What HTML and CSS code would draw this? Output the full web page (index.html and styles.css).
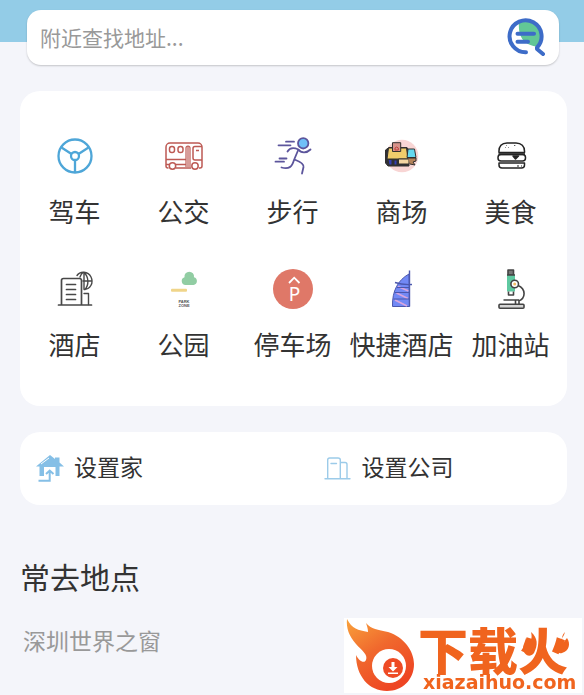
FILE: index.html
```html
<!DOCTYPE html>
<html lang="zh-CN">
<head>
    <meta charset="UTF-8">
    <meta name="viewport" content="width=device-width, initial-scale=1.0">
    <title>附近查找</title>
    <link rel="stylesheet" href="styles.css">
</head>
<body>
    <header class="top-bar"></header>

    <form class="search-box">
        <input type="text" class="search-input" id="search-input" placeholder="附近查找地址..." aria-label="附近查找地址">
        <button type="button" class="search-btn" aria-label="搜索">
            <svg class="icon" viewBox="0 0 40 40" fill="none" stroke="#3d6cc8" stroke-width="4" stroke-linecap="round" stroke-linejoin="round">
                <path d="M13 4C12 17 16 26 30 28.500C37 22 37 11 30 6C25 2 18 1 13 4z" fill="#62c796" stroke="none"/>
                <path d="M20 34.300A16 16 0 1 1 31 29.500V31L37 36"/>
                <path d="M11.500 15.700H28M11.500 23.700H22"/>
            </svg>
        </button>
    </form>

    <main class="container">
        <!-- Categories -->
        <nav class="card category-grid">
            <a href="#drive" class="category">
                <svg class="icon" viewBox="0 0 40 40" fill="none" stroke="#4ea6d8" stroke-width="2.300">
                    <circle cx="20" cy="20" r="16.500"/>
                    <circle cx="20" cy="20" r="4"/>
                    <path d="M6.500 11.500L16.500 18M33.500 11.500L23.500 18M20 24V36"/>
                </svg>
                <span>驾车</span>
            </a>
            <a href="#bus" class="category">
                <svg class="icon" viewBox="0 0 40 40" fill="none" stroke="#bd5a54" stroke-width="1.500">
                    <path d="M4.500 32H4a2 2 0 0 1-2-2V11a4 4 0 0 1 4-4H34a4 4 0 0 1 4 4V30a2 2 0 0 1-2 2H35M12 32H27"/>
                    <rect x="5.500" y="10.500" width="5" height="6" rx="2.300"/>
                    <rect x="14" y="10.500" width="5" height="6" rx="2.300"/>
                    <path d="M22 31V12q0-2 2-2t2 2V31M24 10V31" stroke-width="1.200"/>
                    <path d="M38 10.500H31q-2 0-2 2V22q0 2 2 2h7M32 14.500h3M2 23.500H22M2 28.500H5M12 28.500H22"/>
                    <circle cx="8.500" cy="30" r="3.200" fill="#fff"/>
                    <circle cx="31" cy="30" r="3.200" fill="#fff"/>
                </svg>
                <span>公交</span>
            </a>
            <a href="#walk" class="category">
                <svg class="icon" viewBox="0 0 40 40" fill="none" stroke="#5c559c" stroke-width="1.800" stroke-linecap="round" stroke-linejoin="round">
                    <circle cx="30.200" cy="7.300" r="5.200" fill="#6fc0f8"/>
                    <path d="M13 5.700H21M5.500 9.300H17.500M6.500 22.500H13.500M2.500 25.700H11"/>
                    <path d="M14.500 15.500C17 11 22 12 25.500 13.500C28 17.500 34 17 37.500 13.500"/>
                    <path d="M25 14.500L21 24C19 31 16 33.500 8.500 31.500M21.500 23.500C28 26 31 28 30.500 31L29 37.500"/>
                </svg>
                <span>步行</span>
            </a>
            <a href="#mall" class="category">
                <svg class="icon" viewBox="0 0 40 40" stroke="#33302f" stroke-width="1" stroke-linejoin="round">
                    <circle cx="20" cy="20" r="16.300" fill="#f8d5d4" stroke="none"/>
                    <path d="M3.500 14L7 11.500H25L27 15V30H6L3.500 27z" fill="#2f3038"/>
                    <path d="M6.500 12H24.500L26 23H5z" fill="#f0cc6b"/>
                    <path d="M10.500 6.700H18.700V15.500H10.500z" fill="#d8928a"/>
                    <path d="M13 12q1.700-2 3.300 0v2H13z" fill="none" stroke="#c3413d"/>
                    <path d="M26 13H32.500L34 21.500H25z" fill="#65d9ef"/>
                    <path d="M6 23.500H10V29H7zM12 24H15V29H12z" fill="#343fb3"/>
                    <path d="M16.500 23H27V28H16.500z" fill="#f3d5a2"/>
                    <path d="M26 22H34V25L31 26L33 29L28 28" fill="#b58359"/>
                </svg>
                <span>商场</span>
            </a>
            <a href="#food" class="category">
                <svg class="icon" viewBox="0 0 40 40" fill="#fff" stroke="#242424" stroke-width="1.500" stroke-linejoin="round">
                    <path d="M8 16.500C7.500 10 11 7 16 7H25C30 7 34 10 33.500 16.500z"/>
                    <path d="M15.500 9.500h.5M17.500 11.500h.5M23.500 9l.5 1M14 11.500h.5" stroke-width="1"/>
                    <rect x="7" y="18.500" width="27.500" height="6.500" rx="3"/>
                    <path d="M7.500 18.200H34" stroke-width="2"/>
                    <path d="M22 20L24.500 23L27.500 20z" fill="#242424"/>
                    <path d="M8 27H33.500V29q0 3-3 3H11q-3 0-3-3z"/>
                    <path d="M26 30h2M30 30h1" stroke-width="1"/>
                </svg>
                <span>美食</span>
            </a>
            <a href="#hotel" class="category">
                <svg class="icon" viewBox="0 0 40 40" fill="none" stroke="#484848" stroke-width="1.700" stroke-linecap="round" stroke-linejoin="round">
                    <path d="M6.500 36V11.500q0-2 2-2H24.500q2 0 2 2V36M3.500 36H36.500"/>
                    <path d="M11.500 15.500H20.500M11.500 20.500H20.500M11.500 25.500H20.500M11.500 30.500H20.500"/>
                    <path d="M22 6.500C25 2 33 2 36 8C39 14 35 20.500 29 20.500M29 3.500C34 8 34 16 30 20.500M28 3.500Q26 5 25 8M29 3.500V20M28 12H37" stroke-width="1.400"/>
                    <path d="M29 24.500H33.500V35.500" stroke-width="1.400"/>
                </svg>
                <span>酒店</span>
            </a>
            <a href="#park" class="category">
                <svg class="icon" viewBox="0 0 40 40">
                    <path d="M21.500 16a4 4 0 0 1-1-7.800a4.800 4.800 0 1 1 9.500 0a4 4 0 0 1-.5 7.800z" fill="#91cda3"/>
                    <rect x="7" y="19.700" width="16" height="3" rx="1" fill="#f0d58a"/>
                    <text class="park-text" x="20" y="33.500">PARK</text>
                    <text class="park-text" x="20" y="38">ZONE</text>
                </svg>
                <span>公园</span>
            </a>
            <a href="#parking" class="category">
                <svg class="icon" viewBox="0 0 40 40">
                    <circle cx="20" cy="20" r="20" fill="#df7868"/>
                    <path d="M16 14L21.200 8.700L26.500 14" fill="none" stroke="#fff" stroke-width="1.800"/>
                    <text class="parking-text" x="21.500" y="32">P</text>
                </svg>
                <span>停车场</span>
            </a>
            <a href="#express-hotel" class="category">
                <svg class="icon" viewBox="0 0 40 40" fill="none" stroke="#4b57ad" stroke-width="1">
                    <path d="M27 5C16 11 10 22 10.500 37.500H27.500z" fill="#7289f5"/>
                    <path d="M16 17.500L26.500 22M14.500 24L26 29.500M13 31L25 37" stroke="#d7a5dd" stroke-width="1.800"/>
                    <path d="M15 18.500H27M12.500 23.500H27M11.500 30H27"/>
                    <path d="M13 13.500Q20 16 30 15.500M27.500 1.500V37.500" stroke-width="1.400"/>
                </svg>
                <span>快捷酒店</span>
            </a>
            <a href="#gas" class="category">
                <svg class="icon" viewBox="0 0 40 40" fill="none" stroke="#444" stroke-width="1.600" stroke-linejoin="round">
                    <path d="M17 1H22.500V6H17z" fill="#777"/>
                    <path d="M16 6H24V22.500H16z" fill="#5fc9a1" stroke="none"/>
                    <path d="M16 6H24M17.500 22.500V26H22.500V22.500"/>
                    <path d="M27 16.500C35 20 35 29 27.500 32M12.500 31H28M24.500 31V35M28 31V35"/>
                    <circle cx="23.700" cy="15" r="3.800" fill="#fff"/>
                    <circle cx="23.700" cy="15" r="1.500" fill="#f2bd63" stroke="none"/>
                    <rect x="8" y="35.200" width="25" height="4" rx="1" fill="#d5d5d5"/>
                </svg>
                <span>加油站</span>
            </a>
        </nav>

        <!-- Home and company -->
        <section class="card shortcuts">
            <a href="#home" class="shortcut">
                <svg class="shortcut-icon" viewBox="0 0 28 28" fill="#85bfe6">
                    <path d="M14 1L19 5V3.500H23.500V8.500L28 12.500H23.500V22H19.500V13H8V22H3.500V12.500H0z"/>
                    <path d="M5 10L13 4" stroke="#fff" stroke-width="1"/>
                    <path d="M2.500 26.700H13.700V17M10 20L13.700 16.500L17.500 20" fill="none" stroke="#85bfe6" stroke-width="2"/>
                </svg>
                <span class="shortcut-text">设置家</span>
            </a>
            <a href="#company" class="shortcut">
                <svg class="shortcut-icon" viewBox="0 0 28 28" fill="none" stroke="#9ccbe9" stroke-width="1.400" stroke-linecap="round">
                    <path d="M1 24.700H26M3.700 24.500V6q0-2 2-2H14q2.300 0 2.300 2V24.500M16.300 8.500H21q2 0 2 2V24.500M7 9.500H12.500"/>
                </svg>
                <span class="shortcut-text">设置公司</span>
            </a>
        </section>

        <section class="places">
            <h1>常去地点</h1>
            <a href="#place" class="place">深圳世界之窗</a>
        </section>
    </main>

    <!-- Site badge -->
    <div class="badge">
        <svg class="badge-logo" viewBox="0 0 238 75">
            <defs>
                <linearGradient id="flame" x1="0" y1="0" x2=".6" y2="1">
                    <stop offset="0" stop-color="#f9a23b"/>
                    <stop offset=".5" stop-color="#f0682d"/>
                    <stop offset="1" stop-color="#ee4523"/>
                </linearGradient>
            </defs>
            <path d="M3 1C8 11 14 12 24 14C24 11 23 8 22 5C27 11 34 12 44 14C60 19 70 33 70 46C70 62 58 73 43 73C25 73 12 58 12 37C15 43 20 46 22 42C24 36 18 33 12 26C5 18 2 10 3 1z" fill="url(#flame)"/>
            <circle cx="45" cy="48" r="17" fill="#fff"/>
            <circle cx="49" cy="50" r="10" fill="#ee4b25"/>
            <path d="M47.500 44H50.500V49H53.500L49 53.500L44.500 49H47.500zM44 54.500H54V56H44z" fill="#fff"/>
            <text class="badge-name" x="74" y="52">下载火</text>
            <path d="M187 14C194 20 194 27 190 35C186 40 180 38 179 30C179 27 181 24 182 20L185 25C188 22 188 18 187 14z" fill="#f0641e"/>
            <path d="M221 14C217 18 218 22 219 25L223 20C227 26 225 33 218 35C214 36 210 33 212 28C213 24 219 22 221 14z" fill="#f0641e"/>
            <text class="badge-url" x="79" y="71">xiazaihuo.com</text>
        </svg>
    </div>
</body>
</html>
```

FILE: styles.css
```css
* {
    box-sizing: border-box;
}
body {
    margin: 0;
    background-color: #f4f5fa;
    color: #333;
    font-family: "Noto Sans CJK SC", sans-serif;
}
a {
    color: inherit;
    text-decoration: none;
}
.top-bar {
    height: 42px;
    background-color: #93cce7;
}

/* Search */
.search-box {
    display: flex;
    align-items: center;
    height: 55px;
    margin: -32px 25px 0 27px;
    padding: 0 13px;
    background-color: white;
    border-radius: 14px;
    box-shadow: 0 1px 2px rgba(0, 0, 0, 0.2);
}
.search-input {
    flex: 1;
    min-width: 0;
    padding: 0 0 2px;
    border: none;
    outline: none;
    background: none;
    font-family: inherit;
    font-size: 21px;
    color: #333;
}
.search-input::placeholder {
    color: #999;
}
.search-btn {
    padding: 0;
    border: none;
    background: none;
    cursor: pointer;
}
.icon {
    display: block;
    width: 40px;
    height: 40px;
}

/* Cards */
.container {
    margin: 26px 17px 0 20px;
}
.card {
    background-color: white;
    border-radius: 20px;
}
.category-grid {
    display: grid;
    grid-template-columns: repeat(5, 1fr);
    row-gap: 38px;
    padding: 45px 2px 42px 0;
}
.category {
    display: flex;
    flex-direction: column;
    align-items: center;
    gap: 15px;
    font-size: 26px;
    line-height: 40px;
    white-space: nowrap;
}
.park-text {
    font-family: "Liberation Sans", sans-serif;
    font-size: 4px;
    font-weight: bold;
    text-anchor: middle;
    fill: #555;
}
.parking-text {
    font-family: "Noto Sans", sans-serif;
    font-size: 19px;
    text-anchor: middle;
    fill: white;
}
.shortcuts {
    display: grid;
    grid-template-columns: 1fr 1fr;
    column-gap: 60px;
    margin-top: 26px;
    padding: 16px 16px 17px;
}
.shortcut {
    display: flex;
    align-items: center;
    gap: 10px;
    font-size: 23px;
    line-height: 36px;
}
.shortcut-icon {
    width: 28px;
    height: 28px;
}
.shortcut-text {
    padding-bottom: 4px;
}

/* Places */
.places {
    margin-top: 49px;
}
.places h1 {
    margin: 0;
    font-size: 30px;
    font-weight: normal;
    line-height: 44px;
}
.place {
    display: block;
    margin-top: 22px;
    padding-left: 3px;
    color: #999;
    font-size: 23px;
    line-height: 40px;
}

/* Badge in the bottom corner */
.badge {
    position: fixed;
    right: 2px;
    bottom: 2px;
    background-color: white;
}
.badge-logo {
    display: block;
    width: 238px;
    height: 75px;
    overflow: visible;
}
.badge-name {
    font-size: 50px;
    font-weight: 900;
    fill: #f0641e;
}
.badge-url {
    font-family: "DejaVu Sans", sans-serif;
    font-size: 19px;
    font-weight: bold;
    fill: #f0641e;
}
```
